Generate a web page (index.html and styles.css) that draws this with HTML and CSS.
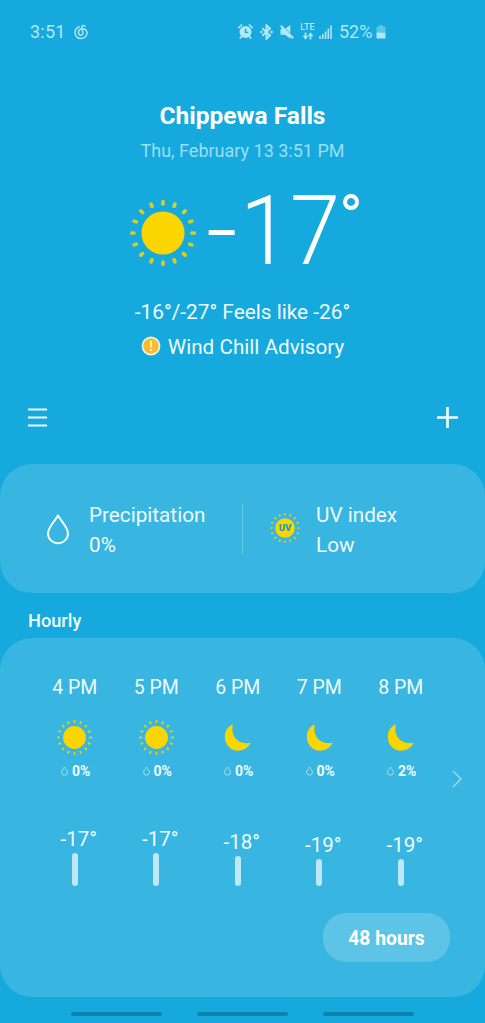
FILE: index.html
```html
<!DOCTYPE html>
<html lang="en">
<head>
<meta charset="utf-8">
<title>Weather</title>
<link rel="stylesheet" href="styles.css">
</head>
<body>
<svg class="defs" width="0" height="0">
  <symbol id="sun" viewBox="-33 -33 66 66">
    <circle r="21.6" fill="#fad500"/>
    <path opacity=".85" fill="none" stroke="#fad500" stroke-width="3.7" stroke-linecap="round" d="M29 0H31.2M-29 0H-31.2M0 29V31.2M0-29V-31.2M26.8 11.1L28.8 11.9M26.8-11.1L28.8-11.9M-26.8 11.1L-28.8 11.9M-26.8-11.1L-28.8-11.9M11.1 26.8L11.9 28.8M11.1-26.8L11.9-28.8M-11.1 26.8L-11.9 28.8M-11.1-26.8L-11.9-28.8M20.5 20.5L22.1 22.1M20.5-20.5L22.1-22.1M-20.5 20.5L-22.1 22.1M-20.5-20.5L-22.1-22.1"/>
  </symbol>
  <symbol id="moon" viewBox="0 0 34 34">
    <path fill="#fad500" d="M12.600 4.200C6.800 6.500 4.700 11.500 4.700 16.500C4.700 24 10.500 29.800 17.500 29.800C23 29.800 27.500 27 29.800 22.200C18 24.500 9.800 16 12.600 4.200Z"/>
  </symbol>
  <symbol id="drop" viewBox="0 0 24 32">
    <path fill="none" stroke="currentColor" stroke-width="2" stroke-linejoin="round" d="M12 2.500C9.500 7.500 2 14 2 20.500A10 9.700 0 0 0 22 20.500C22 14 14.500 7.500 12 2.500Z"/>
  </symbol>
</svg>

<header class="status">
  <span class="clock">3:51</span>
  <svg class="s-music" viewBox="0 0 14 16"><path d="M5.300 2.700C2.800 3.500 1 5.800 1 8.600C1 12.100 3.700 14.600 7 14.600C10.300 14.600 13 12.200 13 9C13 6.400 10.900 4.700 8.400 4.700C6 4.700 4.500 6.400 4.500 8.500C4.500 10.200 5.500 11.200 6.900 11.200C8.400 11.200 9.200 10 8.900 8.600L7.900 3.700C7.500 1.500 9.300 .8 11 2" fill="none" stroke="currentColor" stroke-width="1.500" stroke-linecap="round"/></svg>
  <div class="tray">
    <svg class="s-alarm" viewBox="0 0 15 15"><circle cx="7.500" cy="8" r="6" fill="currentColor"/><path d="M.8 3.700L3.600 1M14.200 3.700L11.400 1M3.500 12.500L2.300 14M11.500 12.500L12.700 14" stroke="currentColor" stroke-width="1.700" stroke-linecap="round"/><path d="M7.500 4.700V8.400H10.300" fill="none" stroke="#16a9dd" stroke-width="1.400"/></svg>
    <svg class="s-bt" viewBox="0 0 13 16"><path d="M2.300 4.300L10 11.400L6.500 14.600V1.400L10 4.600L2.300 11.700" fill="none" stroke="currentColor" stroke-width="2"/><circle cx="1.400" cy="8" r="1.300" fill="currentColor"/><circle cx="11.600" cy="8" r="1.300" fill="currentColor"/></svg>
    <svg class="s-mute" viewBox="0 0 14 14"><path d="M.5 4H3.500L10.300 10.800V13.800L5 9.800H.5ZM5.500 3.500L10.300 0V8.300Z" fill="currentColor"/><path d="M.8 .8L13.200 13.200" stroke="currentColor" stroke-width="2.200"/></svg>
    <div class="lte"><span>LTE</span><svg viewBox="0 0 12 8"><path d="M3.500 .5V5M8.500 7.500V3" stroke="currentColor" stroke-width="1.700"/><path d="M.5 3.800H6.500L3.500 7.700ZM5.500 4.200H11.500L8.500 .3Z" fill="currentColor"/></svg></div>
    <svg class="s-signal" viewBox="0 0 13 14"><path d="M1 11V14M3.800 9V14M6.600 6.500V14M9.300 3.500V14M12 .5V14" stroke="currentColor" stroke-width="1.600"/></svg>
    <span class="pct">52%</span>
    <svg class="s-batt" viewBox="0 0 10 14"><path opacity=".45" d="M.5 2.500Q.5 1.500 1.500 1.500H3V0H7V1.500H8.500Q9.500 1.500 9.500 2.500V7.500H.5Z" fill="currentColor"/><path d="M.5 7.500H9.500V12.500Q9.500 13.500 8.500 13.500H1.500Q.5 13.500 .5 12.500Z" fill="currentColor"/></svg>
  </div>
</header>

<section class="current">
  <h1 class="city">Chippewa Falls</h1>
  <p class="date">Thu, February 13 3:51 PM</p>
  <div class="now">
    <svg class="now-sun"><use href="#sun"/></svg>
    <span class="now-minus">-</span><span class="now-temp">17</span><span class="now-deg">°</span>
  </div>
  <p class="range">-16°/-27° Feels like -26°</p>
  <p class="advisory">
    <svg viewBox="0 0 20 20"><circle cx="10" cy="10" r="8.600" fill="#fdbc2c" stroke="#e8f9f8" stroke-width="1.600"/><path d="M10 5V11.500M10 13V15" stroke="#fff3cd" stroke-width="1.900"/></svg>
    <span>Wind Chill Advisory</span>
  </p>
</section>

<nav class="toolbar">
  <svg class="menu" viewBox="0 0 19 19"><path d="M0 1.500H19M0 9.500H19M0 17.500H19" stroke="currentColor" stroke-width="2"/></svg>
  <svg class="plus" viewBox="0 0 21 21"><path d="M0 10.500H21M10.500 0V21" stroke="currentColor" stroke-width="2.700"/></svg>
</nav>

<section class="card details">
  <div class="detail">
    <svg class="detail-drop"><use href="#drop"/></svg>
    <div class="detail-text"><span>Precipitation</span><span>0%</span></div>
  </div>
  <div class="detail uv">
    <div class="uv-icon"><svg><use href="#sun"/></svg><span>UV</span></div>
    <div class="detail-text"><span>UV index</span><span>Low</span></div>
  </div>
</section>

<h2 class="heading">Hourly</h2>

<section class="card hourly">
  <div class="hours">
    <div class="hour"><span class="time">4 PM</span><svg class="wx"><use href="#sun"/></svg><span class="rain"><svg><use href="#drop"/></svg>0%</span><div class="graph"><span class="temp">-17°</span><i class="bar" style="height:33px"></i></div></div>
    <div class="hour"><span class="time">5 PM</span><svg class="wx"><use href="#sun"/></svg><span class="rain"><svg><use href="#drop"/></svg>0%</span><div class="graph"><span class="temp">-17°</span><i class="bar" style="height:33px"></i></div></div>
    <div class="hour"><span class="time">6 PM</span><svg class="wx"><use href="#moon"/></svg><span class="rain"><svg><use href="#drop"/></svg>0%</span><div class="graph"><span class="temp">-18°</span><i class="bar" style="height:30px"></i></div></div>
    <div class="hour"><span class="time">7 PM</span><svg class="wx"><use href="#moon"/></svg><span class="rain"><svg><use href="#drop"/></svg>0%</span><div class="graph"><span class="temp">-19°</span><i class="bar" style="height:27px"></i></div></div>
    <div class="hour"><span class="time">8 PM</span><svg class="wx"><use href="#moon"/></svg><span class="rain"><svg><use href="#drop"/></svg>2%</span><div class="graph"><span class="temp">-19°</span><i class="bar" style="height:27px"></i></div></div>
    <svg class="next" viewBox="0 0 10 18"><path d="M1 1L9 9L1 17" fill="none" stroke="currentColor" stroke-width="1.400"/></svg>
  </div>
  <button class="more">48 hours</button>
</section>

<footer class="gesture"><i></i><i></i><i></i></footer>
</body>
</html>
```
FILE: styles.css
```css
* { box-sizing: border-box; margin: 0; padding: 0; }
body {
  width: 485px;
  height: 1023px;
  overflow: hidden;
  background: #16a9dd;
  color: #effcff;
  font-family: Roboto, "Liberation Sans", sans-serif;
  display: flex;
  flex-direction: column;
}
svg { display: block; flex: none; }
.defs { position: absolute; }

.status { height: 63px; padding-left: 30px; display: flex; align-items: center; color: #b0e8f7; font-size: 18px; }
.clock { width: 44px; letter-spacing: .2px; }
.s-music { width: 14px; height: 16px; }
.tray { margin-left: 150px; display: flex; align-items: center; }
.s-alarm { width: 15px; height: 15px; }
.s-bt { width: 13px; height: 16px; margin-left: 7px; }
.s-mute { width: 14px; height: 14px; margin-left: 7px; }
.lte { width: 15px; height: 17px; margin-left: 6px; display: flex; flex-direction: column; align-items: center; gap: 1px; font-size: 9px; line-height: 8px; font-weight: 500; }
.lte svg { width: 12px; height: 8px; }
.s-signal { width: 13px; height: 14px; margin-left: 4px; }
.pct { width: 33px; margin-left: 7px; }
.s-batt { width: 10px; height: 14px; margin-left: 4px; }

.current { height: 317px; padding-top: 37px; display: flex; flex-direction: column; align-items: center; white-space: nowrap; }
.city { height: 31px; line-height: 31px; font-size: 24.500px; font-weight: 700; color: #fff; }
.date { height: 40px; line-height: 40px; font-size: 18px; color: #9bdff5; }
.now { width: 485px; height: 120px; padding-left: 130px; display: flex; line-height: 120px; font-size: 97px; font-weight: 300; color: #fff; }
.now-sun { width: 66px; height: 66px; margin-top: 29px; }
.now-minus { width: 34px; margin-left: 10px; line-height: 118px; transform: scaleX(1.14); transform-origin: left; }
.now-temp { width: 101px; transform: scaleX(.93); transform-origin: left; }
.now-deg { width: 22px; font-size: 64px; line-height: 95px; font-weight: 400; margin-left: -2px; }
.range { height: 40px; line-height: 40px; font-size: 20.800px; margin-top: 1px; }
.advisory { height: 30px; display: flex; align-items: center; gap: 7px; font-size: 20.700px; }
.advisory svg { width: 20px; height: 20px; margin-bottom: 2px; }

.toolbar { height: 84px; padding: 0 27px 10px 28px; display: flex; align-items: center; justify-content: space-between; }
.menu { width: 19px; height: 19px; }
.plus { width: 21px; height: 21px; }

.card { background: #38b5e0; border-radius: 32px; flex: none; }
.details { height: 129px; display: flex; align-items: center; }
.detail { width: 242px; height: 50px; display: flex; align-items: center; padding-left: 46px; }
.detail-drop { width: 24px; height: 32px; margin-right: 19px; }
.detail-text { display: flex; flex-direction: column; padding-top: 2px; font-size: 20.700px; line-height: 30px; white-space: nowrap; }
.uv { border-left: 1px solid #66c9ea; padding-left: 27px; }
.uv-icon { width: 30px; height: 30px; margin: 0 16px 1px 0; display: grid; place-items: center; }
.uv-icon svg, .uv-icon span { grid-area: 1 / 1; }
.uv-icon svg { width: 30px; height: 30px; }
.uv-icon span { color: #249eb5; font-size: 9.500px; font-weight: 900; line-height: 10px; }

.heading { height: 45px; padding: 6px 28px 0; line-height: 44px; font-size: 18.200px; font-weight: 500; }

.hourly { height: 359px; padding: 35px 35px 0 34px; display: flex; flex-direction: column; }
.hours { display: flex; height: 240px; }
.hour { width: 81.500px; flex: none; display: flex; flex-direction: column; align-items: center; }
.time { font-size: 19.500px; line-height: 30px; }
.wx { width: 35px; height: 35px; margin-top: 17px; }
.rain { display: flex; align-items: center; gap: 4px; margin-top: 7px; padding-left: 2px; font-size: 14px; line-height: 18px; font-weight: 700; }
.rain svg { width: 7px; height: 10px; }
.graph { height: 106px; display: flex; flex-direction: column; align-items: center; justify-content: flex-end; }
.temp { font-size: 20.500px; line-height: 28px; padding-left: 8px; }
.bar { width: 6px; border-radius: 3px; background: #bfe8f6; }
.next { width: 10px; height: 18px; margin: 97px 0 0 10px; color: #9edcf1; }
.more { align-self: flex-end; width: 127px; height: 49px; padding-top: 1px; border: 0; border-radius: 23px; background: #5ec4e7; color: #fff; font: 700 19.300px/49px Roboto, sans-serif; }

.gesture { display: flex; gap: 35px; padding: 15px 0 0 71px; }
.gesture i { width: 91px; height: 4px; border-radius: 2px; background: #0b82b0; }
```
